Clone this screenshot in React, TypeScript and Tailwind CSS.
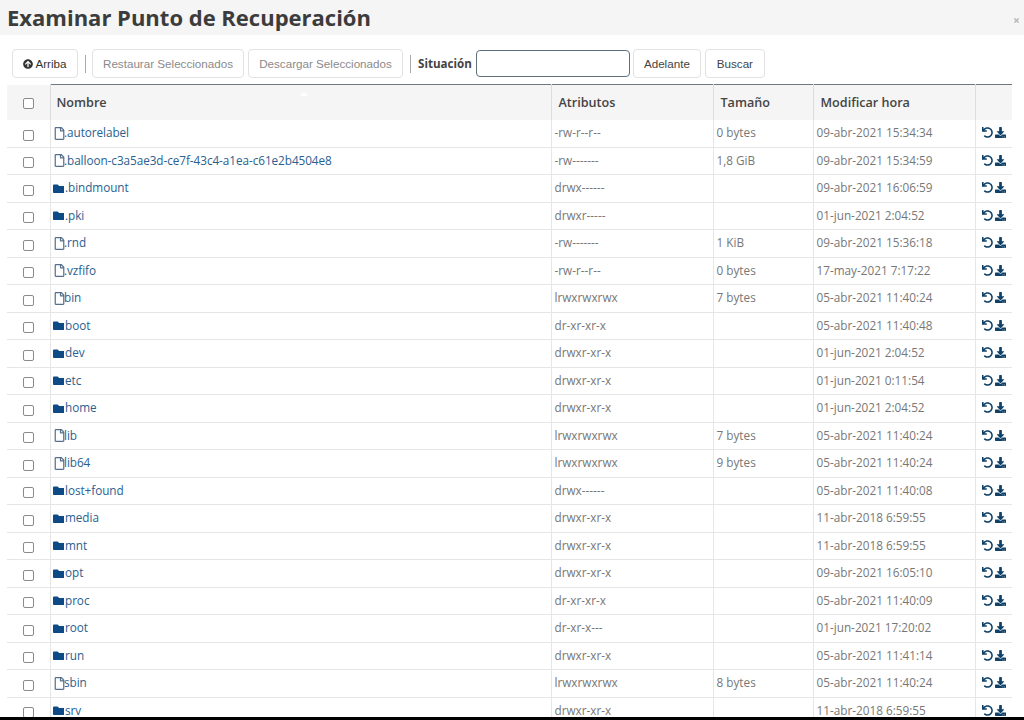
import { FaArrowCircleUp, FaDownload, FaFolder, FaRegFile, FaTimes, FaUndo } from "react-icons/fa";

type Entry = { name: string; dir?: boolean; attrs: string; size?: string; time: string };

const ENTRIES: Entry[] = [
  { name: ".autorelabel", attrs: "-rw-r--r--", size: "0 bytes", time: "09-abr-2021 15:34:34" },
  { name: ".balloon-c3a5ae3d-ce7f-43c4-a1ea-c61e2b4504e8", attrs: "-rw-------", size: "1,8 GiB", time: "09-abr-2021 15:34:59" },
  { name: ".bindmount", dir: true, attrs: "drwx------", time: "09-abr-2021 16:06:59" },
  { name: ".pki", dir: true, attrs: "drwxr-----", time: "01-jun-2021 2:04:52" },
  { name: ".rnd", attrs: "-rw-------", size: "1 KiB", time: "09-abr-2021 15:36:18" },
  { name: ".vzfifo", attrs: "-rw-r--r--", size: "0 bytes", time: "17-may-2021 7:17:22" },
  { name: "bin", attrs: "lrwxrwxrwx", size: "7 bytes", time: "05-abr-2021 11:40:24" },
  { name: "boot", dir: true, attrs: "dr-xr-xr-x", time: "05-abr-2021 11:40:48" },
  { name: "dev", dir: true, attrs: "drwxr-xr-x", time: "01-jun-2021 2:04:52" },
  { name: "etc", dir: true, attrs: "drwxr-xr-x", time: "01-jun-2021 0:11:54" },
  { name: "home", dir: true, attrs: "drwxr-xr-x", time: "01-jun-2021 2:04:52" },
  { name: "lib", attrs: "lrwxrwxrwx", size: "7 bytes", time: "05-abr-2021 11:40:24" },
  { name: "lib64", attrs: "lrwxrwxrwx", size: "9 bytes", time: "05-abr-2021 11:40:24" },
  { name: "lost+found", dir: true, attrs: "drwx------", time: "05-abr-2021 11:40:08" },
  { name: "media", dir: true, attrs: "drwxr-xr-x", time: "11-abr-2018 6:59:55" },
  { name: "mnt", dir: true, attrs: "drwxr-xr-x", time: "11-abr-2018 6:59:55" },
  { name: "opt", dir: true, attrs: "drwxr-xr-x", time: "09-abr-2021 16:05:10" },
  { name: "proc", dir: true, attrs: "dr-xr-xr-x", time: "05-abr-2021 11:40:09" },
  { name: "root", dir: true, attrs: "dr-xr-x---", time: "01-jun-2021 17:20:02" },
  { name: "run", dir: true, attrs: "drwxr-xr-x", time: "05-abr-2021 11:41:14" },
  { name: "sbin", attrs: "lrwxrwxrwx", size: "8 bytes", time: "05-abr-2021 11:40:24" },
  { name: "srv", dir: true, attrs: "drwxr-xr-x", time: "11-abr-2018 6:59:55" },
];

const BTN = "h-[29px] rounded border border-[#e2e2e2] bg-white font-['Liberation_Sans',sans-serif] text-[11.65px]";

function Check({ head }: { head?: boolean }) {
  return (
    <span
      className={`mx-auto block h-[11px] w-[11px] rounded-[2px] border border-[#8a8a8a] bg-white ${head ? "mt-[3px]" : "mt-[4px]"}`}
    />
  );
}

export default function App() {
  return (
    <div className="flex h-[720px] w-[1024px] flex-col overflow-hidden bg-white font-['Open_Sans',sans-serif]">
      <header className="flex h-[35px] shrink-0 items-center justify-between bg-[#f5f5f5] pl-[7px] pr-[4px]">
        <h1 className="text-[22px] font-bold text-[#3c3c3c]">Examinar Punto de Recuperación</h1>
        <FaTimes size={7} className="mt-[6px] text-[#b5b5b5]" />
      </header>

      <div className="flex h-[49px] shrink-0 items-center pl-[12px] pt-[8px]">
        <button className={`${BTN} flex w-[66px] items-center justify-center gap-[2px] text-[#333]`}>
          <FaArrowCircleUp size={10} />
          Arriba
        </button>
        <span className="ml-[7px] mr-[6px] h-[18px] w-px bg-[#aaa]" />
        <button className={`${BTN} w-[152px] text-[#8a8a8a]`}>Restaurar Seleccionados</button>
        <button className={`${BTN} ml-[4px] w-[155px] text-[#8a8a8a]`}>Descargar Seleccionados</button>
        <span className="ml-[7px] mr-[7px] h-[18px] w-px bg-[#aaa]" />
        <span className="text-[11.6px] font-bold text-[#444]">Situación</span>
        <input className="ml-[4px] h-[27px] w-[154px] rounded border border-[#5f6f7c] bg-white" />
        <button className={`${BTN} ml-[3px] w-[68px] text-[#444]`}>Adelante</button>
        <button className={`${BTN} ml-[4px] w-[60px] text-[#444]`}>Buscar</button>
      </div>

      <div className="ml-[7px] w-[1005px] flex-1 overflow-hidden">
        <table className="w-full table-fixed border-collapse">
          <colgroup>
            <col className="w-[43px]" />
            <col className="w-[501px]" />
            <col className="w-[162px]" />
            <col className="w-[100px]" />
            <col className="w-[162px]" />
            <col className="w-[37px]" />
          </colgroup>
          <thead>
            <tr className="h-[35px] bg-[#f5f5f5] text-left text-[12.6px] text-[#444]">
              <th className="border-r border-[#ddd]"><Check head /></th>
              <th className="relative border-r border-t border-[#ddd] border-t-[#6f7780] pl-[6px] pt-[2px] font-semibold">
                Nombre
                <span className="absolute left-[249px] top-[7px] h-0 w-0 border-x-[4px] border-b-[4px] border-x-transparent border-b-white" />
              </th>
              {["Atributos", "Tamaño", "Modificar hora", ""].map((label) => (
                <th key={label} className="border-r border-t border-[#ddd] border-t-[#6f7780] pl-[7px] pt-[2px] font-semibold last:border-r-0">
                  {label}
                </th>
              ))}
            </tr>
          </thead>
          <tbody>
            {ENTRIES.map((e) => (
              <tr key={e.name} className="h-[27.5px] border-b border-[#e6e6e6] text-[11.75px] text-[#777]">
                <td className="border-r border-[#e6e6e6]"><Check /></td>
                <td className="border-r border-[#e6e6e6] pl-[3px]">
                  <span className="flex items-center tracking-[-0.06px] text-[#2a5f8f]">
                    {e.dir ? (
                      <FaFolder size={11.5} className="ml-[-1px] mr-[1px] shrink-0 text-[#0d4a86]" />
                    ) : (
                      <FaRegFile size={13} className="ml-[-1px] mr-[-1.5px] shrink-0 text-[#55708c]" />
                    )}
                    {e.name}
                  </span>
                </td>
                <td className="border-r border-[#e6e6e6] pl-[3px]">{e.attrs}</td>
                <td className="border-r border-[#e6e6e6] pl-[3px]">{e.size}</td>
                <td className="border-r border-[#e6e6e6] pl-[3px]">{e.time}</td>
                <td>
                  <span className="mb-[1px] flex items-center justify-center gap-[2px] text-[#0f4168]">
                    <FaUndo size={11} />
                    <FaDownload size={11} />
                  </span>
                </td>
              </tr>
            ))}
          </tbody>
        </table>
      </div>
      <div className="h-[3px] shrink-0 bg-black" />
    </div>
  );
}
